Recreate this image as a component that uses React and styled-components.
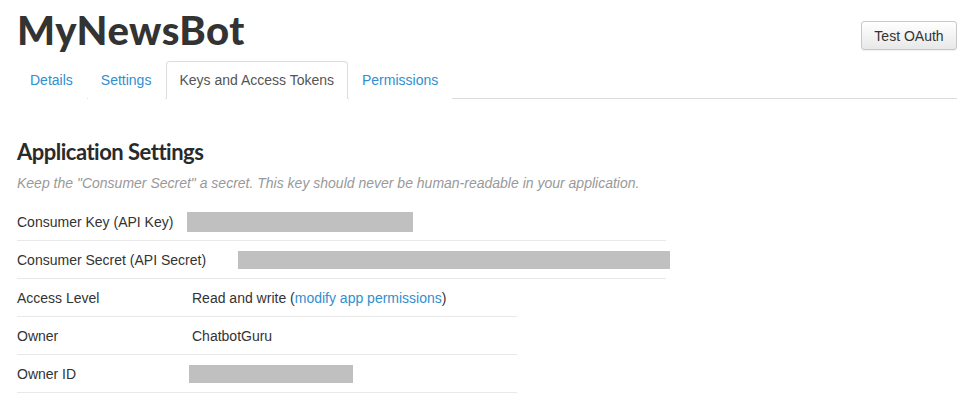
import React from "react";
import styled, { createGlobalStyle } from "styled-components";

const GlobalStyle = createGlobalStyle`
  body {
    margin: 0;
    background: #fff;
    font-family: "Liberation Sans", Arial, sans-serif;
    color: #333;
  }
`;

const Page = styled.div`
  width: 940px;
  padding: 8px 0 0 17px;
`;

const Header = styled.div`
  display: flex;
  justify-content: space-between;
  align-items: flex-start;
`;

const Title = styled.h1`
  margin: 0;
  font-family: Lato, "Noto Sans", sans-serif;
  font-weight: 900;
  font-size: 40px;
  line-height: 44px;
  color: #333;
  letter-spacing: 0.5px;
`;

const Button = styled.button`
  margin-top: 13px;
  width: 96px;
  height: 29px;
  padding: 0;
  font-family: "Liberation Sans", Arial, sans-serif;
  font-size: 14px;
  color: #333;
  background: linear-gradient(#fff, #e8e8e8);
  border: 1px solid #c8c8c8;
  border-radius: 3px;
  box-shadow: 0 1px 1px rgba(0, 0, 0, 0.06);
`;

const Tabs = styled.ul`
  display: flex;
  list-style: none;
  margin: 9px 0 0;
  padding: 0;
  border-bottom: 1px solid #ddd;
`;

const Tab = styled.li`
  margin: 0 1px -1px 0;
  padding: 9px 13px 8px 12px;
  line-height: 19px;
  font-size: 14px;
  border: 1px solid ${p => (p.active ? "#ddd" : "transparent")};
  border-bottom-color: ${p => (p.active ? "#fff" : "transparent")};
  border-radius: 4px 4px 0 0;
  background: #fff;
  color: ${p => (p.active ? "#555" : "#2f8fcf")};
`;

const Section = styled.section`
  margin-top: 40px;
`;

const Heading = styled.h2`
  margin: 0;
  font-family: Lato, "Noto Sans", sans-serif;
  font-weight: 700;
  font-size: 22px;
  line-height: 26px;
  color: #2a2a2a;
  letter-spacing: -0.5px;
`;

const Note = styled.p`
  margin: 8px 0 10px;
  font-size: 14px;
  line-height: 20px;
  font-style: italic;
  color: #999;
`;

const Row = styled.div`
  display: flex;
  align-items: center;
  width: ${p => p.width}px;
  height: 37px;
  border-bottom: 1px solid #e8e8e8;
  font-size: 14px;
`;

const Label = styled.span`
  flex: none;
  min-width: 175px;
  color: #333;
`;

const Value = styled.span`
  color: #333;
`;

const Link = styled.a`
  color: #2f8fcf;
  text-decoration: none;
`;

const Redacted = styled.span`
  display: block;
  flex: none;
  width: ${p => p.w}px;
  height: ${p => p.h}px;
  margin-left: ${p => p.offset}px;
  background: #c0c0c0;
`;

const tabs = ["Details", "Settings", "Keys and Access Tokens", "Permissions"];

export default function App() {
  return (
    <>
      <GlobalStyle />
      <Page>
        <Header>
          <Title>MyNewsBot</Title>
          <Button>Test OAuth</Button>
        </Header>
        <Tabs>
          {tabs.map(t => (
            <Tab key={t} active={t === "Keys and Access Tokens"}>
              {t}
            </Tab>
          ))}
        </Tabs>
        <Section>
          <Heading>Application Settings</Heading>
          <Note>
            Keep the "Consumer Secret" a secret. This key should never be
            human-readable in your application.
          </Note>
          <Row width={649}>
            <Label>Consumer Key (API Key)</Label>
            <Redacted w={226} h={20} offset={-5} />
          </Row>
          <Row width={649}>
            <Label>Consumer Secret (API Secret)</Label>
            <Redacted w={432} h={18} offset={32} />
          </Row>
          <Row width={500}>
            <Label>Access Level</Label>
            <Value>
              Read and write (<Link href="#">modify app permissions</Link>)
            </Value>
          </Row>
          <Row width={500}>
            <Label>Owner</Label>
            <Value>ChatbotGuru</Value>
          </Row>
          <Row width={500}>
            <Label>Owner ID</Label>
            <Redacted w={164} h={18} offset={-3} />
          </Row>
        </Section>
      </Page>
    </>
  );
}
